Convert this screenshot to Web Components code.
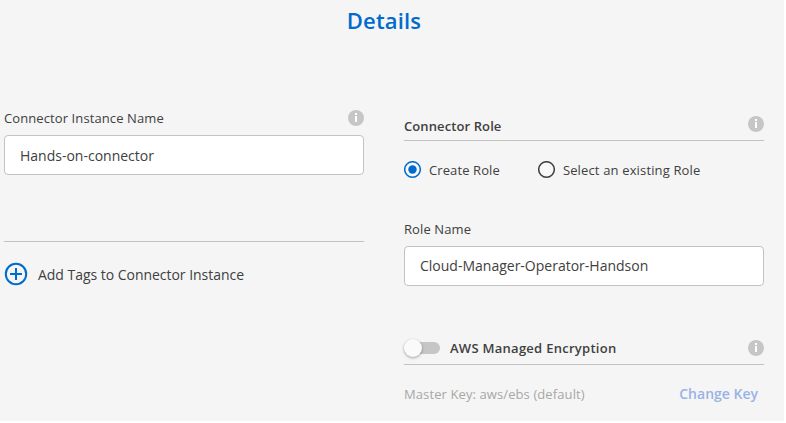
<!DOCTYPE html>
<html lang="en"><head><meta charset="utf-8"><title>Details</title>
<style>html,body{margin:0;background:#fff}body{font:14px "Open Sans","Noto Sans",sans-serif;color:#404040}</style></head>
<body><connector-details></connector-details>
<script>
function define(name, html) {
  const t = document.createElement('template');
  t.innerHTML = html;
  customElements.define(name, class extends HTMLElement {
    constructor() {
      super();
      this.attachShadow({mode: 'open'}).append(t.content.cloneNode(true));
    }
  });
}
define('info-icon', `<style>:host{display:block;width:16px;height:16px;flex:none}svg{display:block}</style>
<svg width="16" height="16"><circle cx="8" cy="8" r="8" fill="#c6c6c6"/><path d="M7 3h2v2H7zM7 6h2v6H7z" fill="#fff"/></svg>`);
define('fit-text', `<style>:host{display:block;white-space:nowrap;line-height:20px}</style><slot></slot>`);
define('text-field', `<style>:host{display:flex;align-items:center;box-sizing:border-box;height:40px;border:1px solid #c2c2c2;border-radius:4px;background:#fff;padding-left:15px}</style><slot></slot>`);
define('radio-option', `<style>:host{display:flex;align-items:center;gap:8px;color:#404040}svg{display:block}.dot{display:none}:host([checked]) .ring{stroke:#006bcd}:host([checked]) .dot{display:block}</style>
<svg width="17" height="18"><circle class="ring" cx="8.5" cy="8.5" r="7.8" fill="#fff" fill-opacity=".3" stroke="#404040" stroke-width="1.5"/><circle class="dot" cx="8.5" cy="8.5" r="4.2" fill="#006bcd"/></svg><slot></slot>`);
define('toggle-switch', `<style>:host{display:flex;align-items:center;width:36px;height:20px}
.track{width:29px;height:12px;margin-left:7px;border-radius:6px;background:#c6c6c6;display:flex;align-items:center}
.knob{width:18px;height:18px;flex:none;margin-left:-7px;border-radius:50%;background:#fafafa;box-shadow:0 1px 3px rgba(0,0,0,.35)}</style><div class="track"><div class="knob"></div></div>`);
define('plus-icon', `<style>:host{display:block}svg{display:block}</style><svg width="24" height="24" fill="none" stroke="#006bcd" stroke-width="2"><circle cx="12" cy="12" r="10.2"/><path d="M12 6v12M6 12h12"/></svg>`);
define('connector-details', `<style>
:host{display:block;box-sizing:border-box;width:784px;height:421px;background:#f5f5f5;padding:10px 20px 0 4px}
h1{margin:0 0 0 -4px;text-align:center;width:768px;font-size:22px;font-weight:600;color:#006bcd;letter-spacing:.15px}
.grid{display:grid;grid-template-columns:360px 360px;gap:40px;margin-top:78px}
.row{display:flex;justify-content:space-between;align-items:center}
.s{font-size:13px;letter-spacing:.1px}
.left .label{height:20px;margin-bottom:7px}
.line{border-bottom:1px solid #c2c2c2}
.left .line{height:66px}
.left text-field fit-text{padding-top:1px}
.tags{display:flex;align-items:center;gap:10px;margin-top:20px;letter-spacing:-.03px}
.tags fit-text{padding-top:2px}
.role{height:33px;box-sizing:border-box;align-items:flex-start}
.radios{display:flex;gap:38px;margin-top:19px;height:20px}
.rn{margin:39px 0 6px;height:21px}
.enc{height:26px;margin-top:52px;align-items:flex-start}
.enc .s{letter-spacing:.27px}
.sw{display:flex;gap:10px}
.key{margin-top:19px;color:#a7a7a7;padding-right:6px}
.bold{font-weight:600}
.link{font-weight:600;color:#99b3e6}
</style>
<h1><fit-text>Details</fit-text></h1>
<div class="grid"><section class="left">
<div class="row label"><fit-text class="s">Connector Instance Name</fit-text><info-icon></info-icon></div>
<text-field><fit-text>Hands-on-connector</fit-text></text-field>
<div class="line"></div>
<div class="tags"><plus-icon></plus-icon><fit-text>Add Tags to Connector Instance</fit-text></div>
</section><section>
<div class="row line role"><fit-text class="bold s" style="margin-top:8px">Connector Role</fit-text><info-icon style="margin-top:8px"></info-icon></div>
<div class="radios"><radio-option checked><fit-text class="s">Create Role</fit-text></radio-option><radio-option><fit-text class="s" style="letter-spacing:.15px">Select an existing Role</fit-text></radio-option></div>
<fit-text class="rn s">Role Name</fit-text>
<text-field><fit-text>Cloud-Manager-Operator-Handson</fit-text></text-field>
<div class="row line enc"><div class="sw"><toggle-switch></toggle-switch><fit-text class="bold s">AWS Managed Encryption</fit-text></div><info-icon style="margin-top:2px"></info-icon></div>
<div class="row key"><fit-text class="s">Master Key: aws/ebs (default)</fit-text><fit-text class="link">Change Key</fit-text></div>
</section></div>`);
</script></body></html>
